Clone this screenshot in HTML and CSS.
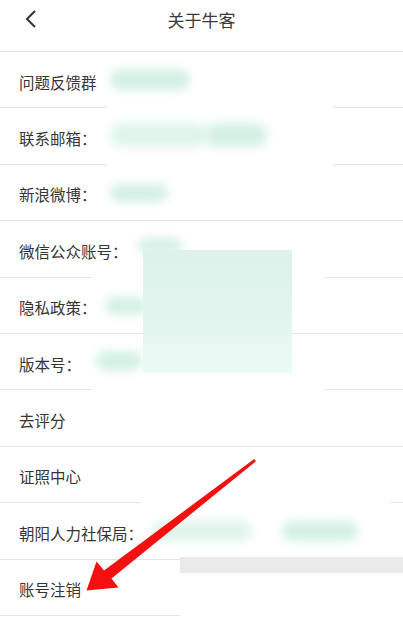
FILE: index.html
```html
<!DOCTYPE html>
<html lang="zh">
<head>
<meta charset="utf-8">
<link rel="stylesheet" href="styles.css">
</head>
<body>
<div class="page">
  <header class="topbar">
    <svg class="back" width="14" height="20" viewBox="0 0 14 20"><path d="M11 2 L3 10 L11 18" fill="none" stroke="#333" stroke-width="2"/></svg>
    <h1 class="title">关于牛客</h1>
  </header>
  <ul class="list">
    <li class="row">问题反馈群</li>
    <li class="row">联系邮箱：</li>
    <li class="row">新浪微博：</li>
    <li class="row">微信公众账号：</li>
    <li class="row">隐私政策：</li>
    <li class="row">版本号：</li>
    <li class="row">去评分</li>
    <li class="row">证照中心</li>
    <li class="row">朝阳人力社保局：</li>
    <li class="row">账号注销</li>
  </ul>

  <div class="patch p1"></div>
  <div class="patch p2"></div>
  <div class="patch p3"></div>
  <div class="patch p4"></div>
  <div class="patch p5"></div>
  <div class="patch p6"></div>
  <div class="gray-band"></div>

  <div class="blob b1"></div>
  <div class="blob b2"></div>
  <div class="blob b3"></div>
  <div class="blob b4"></div>
  <div class="blob b5"></div>
  <div class="blob b6"></div>
  <div class="blob b7"></div>
  <div class="blob b8"></div>
  <div class="blob b9"></div>
  <div class="mask"></div>

  <svg class="arrow" width="403" height="622" viewBox="0 0 403 622">
    <polygon points="254.2,459 256,461.2 111.5,578.5 118.5,587.5 86.5,590.5 96.5,561.5 104,570.5" fill="#f21010"/>
  </svg>
</div>
</body>
</html>
```
FILE: styles.css
```css
* { box-sizing: border-box; }
html, body { margin: 0; padding: 0; background: #fff; }
body { font-family: "Noto Sans CJK SC", "Noto Sans", sans-serif; color: #333; }
.page { position: relative; width: 403px; height: 622px; overflow: hidden; background: #fff; }
.topbar {
  height: 52px;
  display: flex;
  align-items: center;
  justify-content: center;
  position: relative;
  border-bottom: 1px solid #e6e6e6;
  padding-bottom: 12px;
}
.back { position: absolute; left: 24px; top: 9px; }
.title { margin: 0; font-size: 17px; font-weight: 400; color: #3a3a3a; line-height: 22px; }
.list { list-style: none; margin: 0; padding: 0; }
.row {
  height: 56.4px;
  border-bottom: 1px solid #e6e6e6;
  display: flex;
  align-items: center;
  padding-left: 19px;
  padding-top: 4px;
  font-size: 15.5px;
  color: #353535;
}
.patch { position: absolute; background: #fff; }
.p1 { left: 107px; top: 104px; width: 226px; height: 8px; }
.p2 { left: 107px; top: 160px; width: 226px; height: 8px; }
.p3 { left: 92px; top: 273px; width: 233px; height: 8px; }
.p4 { left: 92px; top: 385px; width: 233px; height: 8px; }
.p5 { left: 140px; top: 498px; width: 250px; height: 8px; }
.p6 { left: 180px; top: 573px; width: 223px; height: 49px; }
.gray-band { position: absolute; left: 180px; top: 557px; width: 223px; height: 16px; background: #eaeaea; }
.blob { position: absolute; background: #d4f1e4; filter: blur(5px); border-radius: 12px; }
.b1 { left: 110px; top: 69px; width: 80px; height: 21px; }
.b2 { left: 110px; top: 123px; width: 98px; height: 24px; background: #e0f5ec; }
.b3 { left: 205px; top: 123px; width: 62px; height: 24px; }
.b4 { left: 110px; top: 184px; width: 58px; height: 18px; }
.b5 { left: 138px; top: 238px; width: 44px; height: 15px; }
.b6 { left: 105px; top: 297px; width: 42px; height: 18px; }
.b7 { left: 96px; top: 351px; width: 46px; height: 20px; }
.b8 { left: 152px; top: 521px; width: 100px; height: 20px; background: #e0f4eb; }
.b9 { left: 282px; top: 521px; width: 76px; height: 20px; }
.mask {
  position: absolute;
  left: 143px; top: 250px; width: 149px; height: 123px;
  background: linear-gradient(180deg, #dcf2eb 0%, #e3f5ef 60%, #ecfaf5 100%);
}
.arrow { position: absolute; left: 0; top: 0; }
```
